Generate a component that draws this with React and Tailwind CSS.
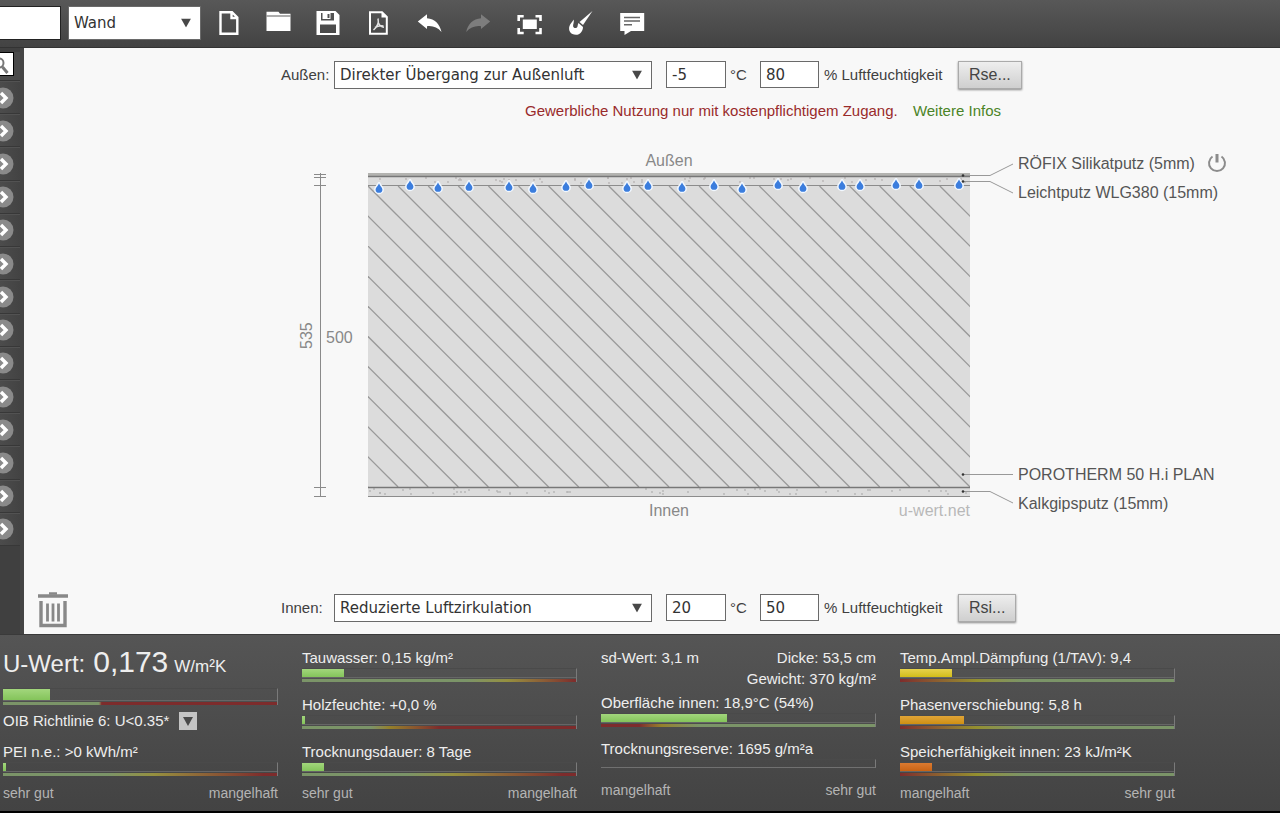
import React, { useState } from "react";

const drops = [
  [379, 188], [410, 185], [438, 187], [469, 186], [509, 186], [533, 188], [566, 186],
  [589, 184], [627, 187], [648, 185], [682, 187], [714, 185], [742, 188], [778, 184],
  [803, 187], [842, 185], [860, 185], [896, 184], [919, 184], [959, 184],
];

// small grains inside the plaster layers
const grains = (top, height, seed) => {
  const list = [];
  let s = seed;
  for (let i = 0; i < 60; i++) {
    s = (s * 16807) % 2147483647;
    const x = 369 + (s % 600);
    s = (s * 16807) % 2147483647;
    list.push([x, top + (s % height)]);
  }
  return list;
};

const RAMP = {
  limit: "bg-linear-to-r from-[#7b9468] from-35% to-[#7d2c2c] to-36%",
  late: "bg-linear-to-r from-[#7b9468] from-60% via-[#95903f] via-75% to-[#7d2c2c]",
  early: "bg-linear-to-r from-[#7b9468] from-25% via-[#94802a] via-32% to-[#7d2c2c] to-50%",
  middle: "bg-linear-to-r from-[#7b9468] from-38% via-[#95903f] via-55% to-[#7d2c2c] to-95%",
  surface: "bg-linear-to-r from-[#7d2c2c] from-14% via-[#94802a] via-22% to-[#7b9468] to-36%",
  good: "bg-linear-to-r from-[#7d2c2c] via-[#94902f] via-28% to-[#7b9468] to-45%",
};

const FILL = {
  green: "bg-linear-to-b from-[#a2d67c] to-[#84c45a]",
  yellow: "bg-linear-to-b from-[#e6d24a] to-[#d2bd14]",
  orange: "bg-linear-to-b from-[#e0a436] to-[#cf9010]",
  red: "bg-linear-to-b from-[#da7a30] to-[#c96312]",
};

const Track = ({ value, color = "green", ramp, tall }) => (
  <div
    className={`flex flex-col border-r border-t border-t-[#4a4a4a] border-r-[#7a7a7a] ${
      tall ? "h-[17px]" : ramp ? "h-3.5" : "h-[9px] border-b border-b-[#707070]"
    }`}
  >
    <div className={`flex-1 ${ramp ? "border-b border-[#666]" : ""}`}>
      {value > 0 && <div className={`h-full ${FILL[color]}`} style={{ width: `${value}%` }} />}
    </div>
    {ramp && <div className={`mt-px h-[3px] ${RAMP[ramp]}`} />}
  </div>
);

const Metric = ({ label, ...track }) => (
  <div>
    <div className="h-5 leading-5 whitespace-nowrap">{label}</div>
    <Track {...track} />
  </div>
);

const Scale = ({ left, right }) => (
  <div className="flex justify-between text-[14px] leading-5 text-[#b4b4b4]">
    <span>{left}</span>
    <span>{right}</span>
  </div>
);

const Select = ({ value, label, id, className }) => (
  <div className={`relative ${className}`}>
    <select
      id={id}
      aria-label={label}
      className="h-full w-full appearance-none border border-[#6a6a6a] bg-white pl-[5px] pr-7 font-['DejaVu_Sans',sans-serif] text-[15px] text-[#333]"
    >
      <option>{value}</option>
    </select>
    <svg viewBox="0 0 10 9" className="pointer-events-none absolute top-1/2 right-2.5 h-[9px] w-2.5 -translate-y-1/2">
      <path d="M0 0h10L5 9z" fill="#484848" />
    </svg>
  </div>
);

const Climate = ({ id, name, transfer, temp, humidity, button }) => {
  const [t, setT] = useState(temp);
  const [h, setH] = useState(humidity);
  const field =
    "h-[27px] self-start border border-[#6a6a6a] bg-white pl-[5px] font-['DejaVu_Sans',sans-serif] text-[15px] text-[#333]";
  return (
    <div className="flex h-7 items-center text-[15px] text-[#404040]">
      <label htmlFor={`${id}-transfer`} className="w-[53px]">{name}</label>
      <Select id={`${id}-transfer`} value={transfer} className="mr-3.5 h-7 w-[318px]" />
      <input id={`${id}-temp`} value={t} onChange={(e) => setT(e.target.value)} className={`${field} w-[60px]`} />
      <label htmlFor={`${id}-temp`} className="w-[34px] pl-1">°C</label>
      <input id={`${id}-hum`} value={h} onChange={(e) => setH(e.target.value)} className={`${field} w-[59px]`} />
      <label htmlFor={`${id}-hum`} className="w-[139px] pl-[5px] whitespace-nowrap">% Luftfeuchtigkeit</label>
      <button className="h-7 border border-[#aaa] bg-linear-to-b from-[#eee] to-[#cfcfcf] px-2.5 text-[16px] whitespace-nowrap text-[#444] shadow-[0_1px_2px_#888]">
        {button}
      </button>
    </div>
  );
};

const Diagram = () => (
  <svg viewBox="290 145 940 380" className="h-[380px] w-[940px] font-['Liberation_Sans',Arial,sans-serif] text-[16px]">
    <defs>
      <clipPath id="brick">
        <rect x="368" y="186" width="602" height="301" />
      </clipPath>
    </defs>

    {/* dimension line */}
    <path
      d="M320.500 173v323M314 174.500h12M314 177.500h12M314 185.500h12M314 487.500h12M314 496.500h12"
      stroke="#8a8a8a"
      fill="none"
    />
    <text x="326" y="343" fill="#888">500</text>
    <text transform="translate(312 349) rotate(-90)" fill="#888">535</text>

    {/* layers */}
    <rect x="368" y="173" width="602" height="324" fill="#dcdcdc" />
    <rect x="368" y="173" width="602" height="4" fill="#b3b3b0" />
    {grains(178, 6, 71).map(([x, y], i) => (
      <circle key={i} cx={x} cy={y} r="0.900" fill="#b8b4b4" />
    ))}
    {grains(489, 6, 933).map(([x, y], i) => (
      <circle key={i} cx={x} cy={y} r="0.900" fill="#b4b4b4" />
    ))}
    <g clipPath="url(#brick)" stroke="#999" strokeWidth="1.300">
      {Array.from({ length: 30 }, (_, i) => {
        const x = 368 + (i - 10) * 30.1;
        return <line key={i} x1={x} y1="186" x2={x + 301} y2="487" />;
      })}
    </g>
    <path d="M368 176.500h602M368 487.500h602" stroke="#777" strokeWidth="1.400" />
    <path d="M368 185.500h602M368 496.500h602" stroke="#8c8c8c" />

    {drops.map(([x, y]) => (
      <path
        key={x}
        transform={`translate(${x} ${y})`}
        d="M0-4.500C1-2 3.400-.5 3.400 1.400A3.400 3.400 0 0 1-3.400 1.400C-3.400-.5-1-2 0-4.500z"
        fill="#3b7ddd"
        stroke="#f2f8ff"
        strokeWidth="3"
        strokeLinejoin="round"
        style={{ paintOrder: "stroke" }}
      />
    ))}

    {/* call-outs */}
    <path
      d="M963 175.500h27L1013 164M963 181.500h27L1013 193M963 474.500h50M963 491.500h27L1013 503"
      stroke="#999"
      fill="none"
    />
    <g fill="#333">
      <circle cx="963" cy="175.500" r="1.300" />
      <circle cx="963" cy="181.500" r="1.300" />
      <circle cx="963" cy="474.500" r="1.300" />
      <circle cx="963" cy="491.500" r="1.300" />
    </g>
    <g fill="#555">
      <text x="1018" y="169">RÖFIX Silikatputz (5mm)</text>
      <text x="1018" y="198">Leichtputz WLG380 (15mm)</text>
      <text x="1018" y="480">POROTHERM 50 H.i PLAN</text>
      <text x="1018" y="509">Kalkgipsputz (15mm)</text>
    </g>
    <text x="669" y="166" textAnchor="middle" fill="#888">Außen</text>
    <text x="669" y="516" textAnchor="middle" fill="#888">Innen</text>
    <text x="970" y="516" textAnchor="end" fill="#b8b8b8">u-wert.net</text>
  </svg>
);

const tools = [
  {
    name: "Neu",
    icon: <path d="M5.500 3.200h11.500l5.300 5.300v16.300H5.500zM16.500 3.500v5.500h5.500" fill="none" stroke="#fff" strokeWidth="2.400" />,
  },
  {
    name: "Öffnen",
    icon: (
      <>
        <path d="M1.500 2.700h12l1.500 2h10.500v17.300h-24z" fill="#fff" />
        <path d="M1.500 7h24" stroke="#777" strokeWidth="1.200" />
      </>
    ),
  },
  {
    name: "Speichern",
    icon: (
      <path
        fillRule="evenodd"
        d="M.5 2h19l4 4v20H.5zM5 4v7.500h13V4zM4 15.500V24h16v-8.500zM6.500 4h8v6h-8zM11.500 5v4h2V5z"
        fill="#fff"
      />
    ),
  },
  {
    name: "PDF",
    icon: (
      <>
        <path d="M4 3.200h12l4.800 4.800v16.800H4z" fill="none" stroke="#fff" strokeWidth="2" />
        <path d="M15.500 2.500v6h6z" fill="#fff" />
        <path d="M12 9.500c1 4-.5 8-4.500 11.500M12.500 14c1 2.500 3 4 5.500 4.300M9 18.500c2.500-1.500 5.500-2 8.500-1.500" fill="none" stroke="#e4e4e4" strokeWidth="1.500" />
      </>
    ),
  },
  {
    name: "Rückgängig",
    icon: <path d="M.8 12.500L10 5.200v4c8 .8 12.500 5.500 14.500 13.800-4-4.500-8.500-6.500-14.500-5.800V20z" fill="#fff" />,
  },
  {
    name: "Wiederholen",
    icon: <path d="M23.200 12.500L14 5.200v4C6 10 1 14.700-.8 23c4-4.500 8.800-6.500 14.800-5.800V20z" fill="#7d7d7d" />,
  },
  {
    name: "Vollbild",
    icon: (
      <>
        <path d="M1.700 12V7.200h5M18.500 7.200h5V12M23.500 19v5h-5M6.700 24h-5v-5" fill="none" stroke="#fff" strokeWidth="2.600" />
        <rect x="5.800" y="10.500" width="14" height="9.500" fill="#fff" />
      </>
    ),
  },
  {
    name: "Darstellung",
    icon: (
      <>
        <path d="M24.500 2L15 16l-3.500-3z" fill="#fff" />
        <path d="M10.500 14l4.500 4c0 4-3 7.800-7 7.800-5.500 0-8-4.500-6.500-8.800.8-2.500 3-4 4-6.500 1.200 2.500-1 5-.3 7.300 1 2 3.800 1.500 4.300-.3.200-1 .4-2.500 1-3.500z" fill="#fff" />
      </>
    ),
  },
  {
    name: "Kommentar",
    icon: (
      <>
        <path d="M2.200 4h24v18H13l-6.500 4v-4H2.200z" fill="#fff" />
        <path d="M6 8.500h16M6 12h16M6 15.700h8" stroke="#666" strokeWidth="1.400" />
      </>
    ),
  },
];

const Sidebar = () => (
  <nav className="w-6 shrink-0 overflow-hidden border-r-4 border-[#454545] bg-[#404040] pt-1">
    <div className="flex h-[29px] border-b border-[#363636] bg-[#4a4a4a]">
      <button aria-label="Suchen" className="h-6 w-3.5 border border-l-0 border-black bg-white">
        <svg viewBox="0 0 13 22" className="h-[22px] w-[13px]">
          <circle cx="-1" cy="10" r="4.500" fill="none" stroke="#777" strokeWidth="2" />
          <path d="M2.500 14l5 6" stroke="#777" strokeWidth="3" />
        </svg>
      </button>
    </div>
    <div className="flex h-[465px] flex-col">
      {Array.from({ length: 14 }, (_, i) => (
        <button
          key={i}
          aria-label="Kategorie öffnen"
          className="w-full flex-1 border-t border-b border-t-[#525252] border-b-[#383838] bg-linear-to-r from-[#4c4c4c] to-[#434343]"
        >
          <svg viewBox="0 0 20 22" className="h-[22px] w-5">
            <circle cx="3" cy="11" r="10.500" fill="#8a8a8a" />
            <path d="M1 6L6 11l-5 5" fill="none" stroke="#fff" strokeWidth="3.400" />
          </svg>
        </button>
      ))}
    </div>
  </nav>
);

const App = () => {
  const [project, setProject] = useState("");

  return (
    <div className="flex min-h-screen flex-col overflow-hidden border-b-2 border-black bg-[#f8f8f8] font-['Liberation_Sans',Arial,sans-serif] text-[15px]">
      <header className="flex h-12 items-start border-b border-[#333] bg-linear-to-b from-[#585858] to-[#434343] pt-1.5">
        <input
          aria-label="Projektname"
          value={project}
          onChange={(e) => setProject(e.target.value)}
          className="mr-[7px] h-[34px] w-[61px] border border-l-0 border-[#222] bg-white"
        />
        <Select label="Bauteil" value="Wand" className="h-[34px] w-[133px]" />
        <div className="ml-[3px] flex w-[453px] justify-between">
          {tools.map((tool) => (
            <button key={tool.name} aria-label={tool.name} className="flex h-[34px] w-[50px] justify-center pt-[3px]">
              <svg viewBox="0 0 28 28" className="size-7 overflow-visible">{tool.icon}</svg>
            </button>
          ))}
        </div>
      </header>

      <div className="flex flex-1">
        <Sidebar />
        <main className="flex min-w-0 flex-1 flex-col justify-between pt-[13px] pb-1.5">
          <div className="mx-auto w-[742px]">
            <Climate id="aussen" name="Außen:" transfer="Direkter Übergang zur Außenluft" temp="-5" humidity="80" button="Rse..." />
            <p className="mt-3 flex justify-between pr-[22px] pl-[244px] leading-5 whitespace-nowrap text-[#992b2b]">
              Gewerbliche Nutzung nur mit kostenpflichtigem Zugang.
              <a href="#infos" className="text-[#4b8427]">Weitere Infos</a>
            </p>
            <div className="relative mt-6 ml-[9px] w-[940px]">
              <Diagram />
              <button aria-label="Schicht deaktivieren" className="absolute top-2 right-[3px] size-5">
                <svg viewBox="0 0 20 20" className="size-5">
                  <path d="M5.500 3.500a8 8 0 1 0 9 0" fill="none" stroke="#8c8c8c" strokeWidth="2" />
                  <path d="M10 1v8.500" stroke="#8c8c8c" strokeWidth="3" />
                </svg>
              </button>
            </div>
          </div>

          <div className="grid grid-cols-[1fr_742px_1fr]">
            <button aria-label="Löschen" className="ml-3.5 h-[37px] w-[30px]">
              <svg viewBox="0 0 30 37" className="h-[37px] w-[30px]" fill="none" stroke="#888">
                <path d="M0 5h30" strokeWidth="3.500" />
                <path d="M11 2.500h8" strokeWidth="2.500" />
                <path d="M3 10v24.500h24V10" strokeWidth="3.400" />
                <path d="M9.500 12.500v18M15 12.500v18M20.500 12.500v18" strokeWidth="2.800" />
              </svg>
            </button>
            <div className="pt-[3px]">
              <Climate id="innen" name="Innen:" transfer="Reduzierte Luftzirkulation" temp="20" humidity="50" button="Rsi..." />
            </div>
          </div>
        </main>
      </div>

      <footer className="border-t border-[#3a3a3a] bg-linear-to-b from-[#555] to-[#434343] pt-[13px] pb-2 pl-[3px] text-[#eee]">
        <div className="grid grid-cols-[repeat(4,275px)] gap-x-6">
          <section>
            <div className="flex h-10 items-baseline gap-2 text-[24px] leading-7">
              U-Wert:
              <span className="text-[30px]">0,173</span>
              <span className="-ml-0.5 text-[17px]">W/m²K</span>
            </div>
            <Track value={17.3} ramp="limit" tall />
            <div className="mb-[5px] flex h-8 items-center gap-2.5">
              OIB Richtlinie 6: U&lt;0.35*
              <button aria-label="Richtlinie wählen" className="flex size-[18px] items-center justify-center bg-[#c4c4c4]">
                <svg viewBox="0 0 10 9" className="h-[9px] w-2.5">
                  <path d="M0 0h10L5 9z" fill="#484848" />
                </svg>
              </button>
            </div>
            <div className="mb-[7px]">
              <Metric label="PEI n.e.: >0 kWh/m²" value={1} ramp="middle" />
            </div>
            <Scale left="sehr gut" right="mangelhaft" />
          </section>

          <section>
            <div className="mb-[7px] flex flex-col gap-[13px]">
              <Metric label="Tauwasser: 0,15 kg/m²" value={15.4} ramp="late" />
              <Metric label="Holzfeuchte: +0,0 %" value={1} ramp="early" />
              <Metric label="Trocknungsdauer: 8 Tage" value={8.2} ramp="middle" />
            </div>
            <Scale left="sehr gut" right="mangelhaft" />
          </section>

          <section>
            <div className="flex justify-between leading-5">
              <span>sd-Wert: 3,1 m</span>
              <span>Dicke: 53,5 cm</span>
            </div>
            <div className="mt-px mb-1 text-right leading-5">Gewicht: 370 kg/m²</div>
            <div className="mb-3 flex flex-col gap-3">
              <Metric label="Oberfläche innen: 18,9°C (54%)" value={46} ramp="surface" />
              <Metric label="Trocknungsreserve: 1695 g/m²a" value={0} />
            </div>
            <Scale left="mangelhaft" right="sehr gut" />
          </section>

          <section>
            <div className="mb-[7px] flex flex-col gap-[13px]">
              <Metric label="Temp.Ampl.Dämpfung (1/TAV): 9,4" value={18.8} color="yellow" ramp="good" />
              <Metric label="Phasenverschiebung: 5,8 h" value={23.2} color="orange" ramp="good" />
              <Metric label="Speicherfähigkeit innen: 23 kJ/m²K" value={11.6} color="red" ramp="good" />
            </div>
            <Scale left="mangelhaft" right="sehr gut" />
          </section>
        </div>
      </footer>
    </div>
  );
};

export default App;
